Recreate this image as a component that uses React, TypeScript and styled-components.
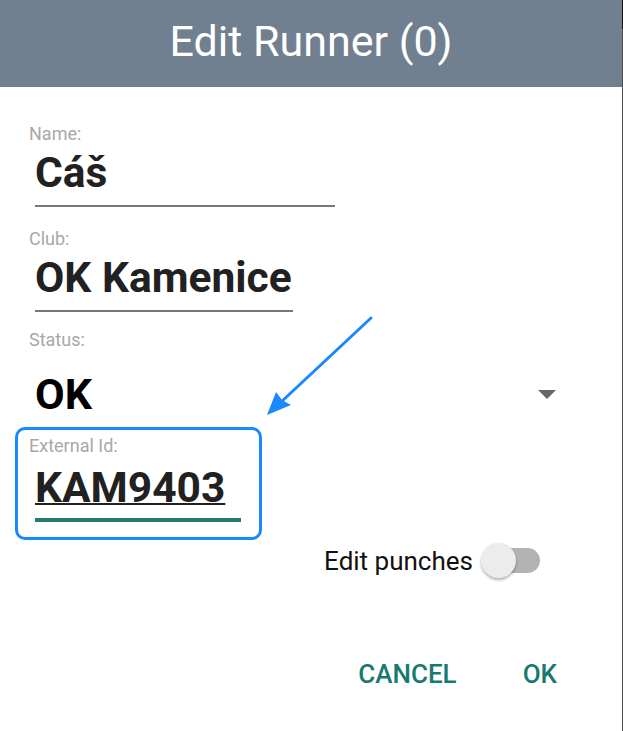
import React from "react";
import styled, { createGlobalStyle } from "styled-components";

const Global = createGlobalStyle`
  html, body { margin: 0; padding: 0; background: #ffffff; }
  body { font-family: Roboto, "Noto Sans", "Liberation Sans", sans-serif; }
  * { box-sizing: border-box; }
`;

const Frame = styled.div`
  position: relative;
  width: 623px;
  height: 731px;
  background: #ffffff;
  border-right: 1px solid #4d4d4d;
  border-image: linear-gradient(to bottom, #111111 30px, #4d4d4d 30px) 1;
  display: flex;
  flex-direction: column;
  overflow: hidden;
`;

const Header = styled.header`
  height: 87px;
  padding-bottom: 5px;
  background: #708090;
  display: flex;
  align-items: center;
  justify-content: center;
`;

const Title = styled.h1`
  margin: 0;
  font-size: 43px;
  line-height: 43px;
  font-weight: 400;
  color: #ffffff;
`;

const Body = styled.main`
  display: flex;
  flex-direction: column;
  padding-top: 37px;
`;

const Field = styled.div<{ $gap: number }>`
  display: flex;
  flex-direction: column;
  align-items: flex-start;
  padding-left: 29px;
  margin-top: ${(p) => p.$gap}px;
`;

const Label = styled.label`
  font-size: 18px;
  line-height: 20px;
  color: #a8a8a8;
`;

const Value = styled.div<{ $width: number; $gap: number }>`
  width: ${(p) => p.$width}px;
  margin-left: 6px;
  margin-top: ${(p) => p.$gap}px;
  font-size: 42.5px;
  font-weight: 700;
  line-height: 50px;
  color: #212121;
  padding-bottom: 7px;
  border-bottom: 2px solid #777777;
  white-space: nowrap;
`;

const Spinner = styled.div`
  width: 531px;
  margin-left: 6px;
  margin-top: 19px;
  padding-right: 10px;
  height: 50px;
  display: flex;
  align-items: center;
  justify-content: space-between;
`;

const SpinnerText = styled.span`
  font-size: 43px;
  font-weight: 700;
  line-height: 50px;
  color: #000000;
`;

const Caret = styled.span`
  width: 0;
  height: 0;
  border-left: 9px solid transparent;
  border-right: 9px solid transparent;
  border-top: 9px solid #666666;
`;

const Highlight = styled.div`
  width: 247px;
  margin-left: 15px;
  margin-top: 8px;
  border: 3px solid #1a88ff;
  border-radius: 10px;
  padding: 5.5px 0 15px 11px;
  display: flex;
  flex-direction: column;
  align-items: flex-start;
`;

const FocusedValue = styled.div`
  width: 206px;
  margin-left: 6px;
  margin-top: 7px;
  font-size: 42.5px;
  font-weight: 700;
  line-height: 50px;
  color: #212121;
  padding-bottom: 5px;
  border-bottom: 4px solid #237a6f;
  text-decoration: underline;
  text-decoration-thickness: 2px;
`;

const ToggleRow = styled.div`
  margin-top: 2px;
  height: 38px;
  padding-right: 82px;
  display: flex;
  align-items: center;
  justify-content: flex-end;
  gap: 7px;
`;

const ToggleLabel = styled.span`
  font-size: 26px;
  line-height: 36px;
  color: #111111;
`;

const Switch = styled.div`
  position: relative;
  width: 60px;
  height: 38px;
  display: flex;
  align-items: center;
`;

const Track = styled.div`
  margin-left: 6px;
  width: 54px;
  height: 25px;
  border-radius: 12.5px;
  background: #b3b3b3;
`;

const Thumb = styled.div`
  position: absolute;
  left: 1px;
  top: 1px;
  width: 35px;
  height: 35px;
  border-radius: 50%;
  background: #ececec;
  box-shadow: 0 2px 3px rgba(0, 0, 0, 0.3);
`;

const Actions = styled.div`
  margin-top: 70.5px;
  padding-right: 32px;
  display: flex;
  justify-content: flex-end;
`;

const ActionButton = styled.button`
  border: none;
  background: transparent;
  padding: 0 33px;
  height: 48px;
  font-family: Roboto, "Noto Sans", sans-serif;
  font-size: 26px;
  font-weight: 500;
  line-height: 48px;
  color: #177a6e;
  cursor: pointer;
`;

const Arrow = styled.svg`
  position: absolute;
  left: 260px;
  top: 310px;
  width: 120px;
  height: 110px;
`;

export default function App() {
  return (
    <>
      <Global />
      <Frame>
        <Header>
          <Title>Edit Runner (0)</Title>
        </Header>
        <Body>
          <Field $gap={0}>
            <Label>Name:</Label>
            <Value $width={300} $gap={4}>Cáš</Value>
          </Field>
          <Field $gap={22}>
            <Label>Club:</Label>
            <Value $width={258} $gap={4}>OK Kamenice</Value>
          </Field>
          <Field $gap={18}>
            <Label>Status:</Label>
            <Spinner>
              <SpinnerText>OK</SpinnerText>
              <Caret />
            </Spinner>
          </Field>
          <Highlight>
            <Label>External Id:</Label>
            <FocusedValue>KAM9403</FocusedValue>
          </Highlight>
          <ToggleRow>
            <ToggleLabel>Edit punches</ToggleLabel>
            <Switch>
              <Track />
              <Thumb />
            </Switch>
          </ToggleRow>
          <Actions>
            <ActionButton>CANCEL</ActionButton>
            <ActionButton>OK</ActionButton>
          </Actions>
        </Body>
        <Arrow viewBox="0 0 120 110">
          <line x1="111" y1="8" x2="20" y2="93" stroke="#1a88ff" strokeWidth="3" strokeLinecap="round" />
          <path d="M7 105 L16 82 L22 90 L31 95 Z" fill="#1a88ff" />
        </Arrow>
      </Frame>
    </>
  );
}
